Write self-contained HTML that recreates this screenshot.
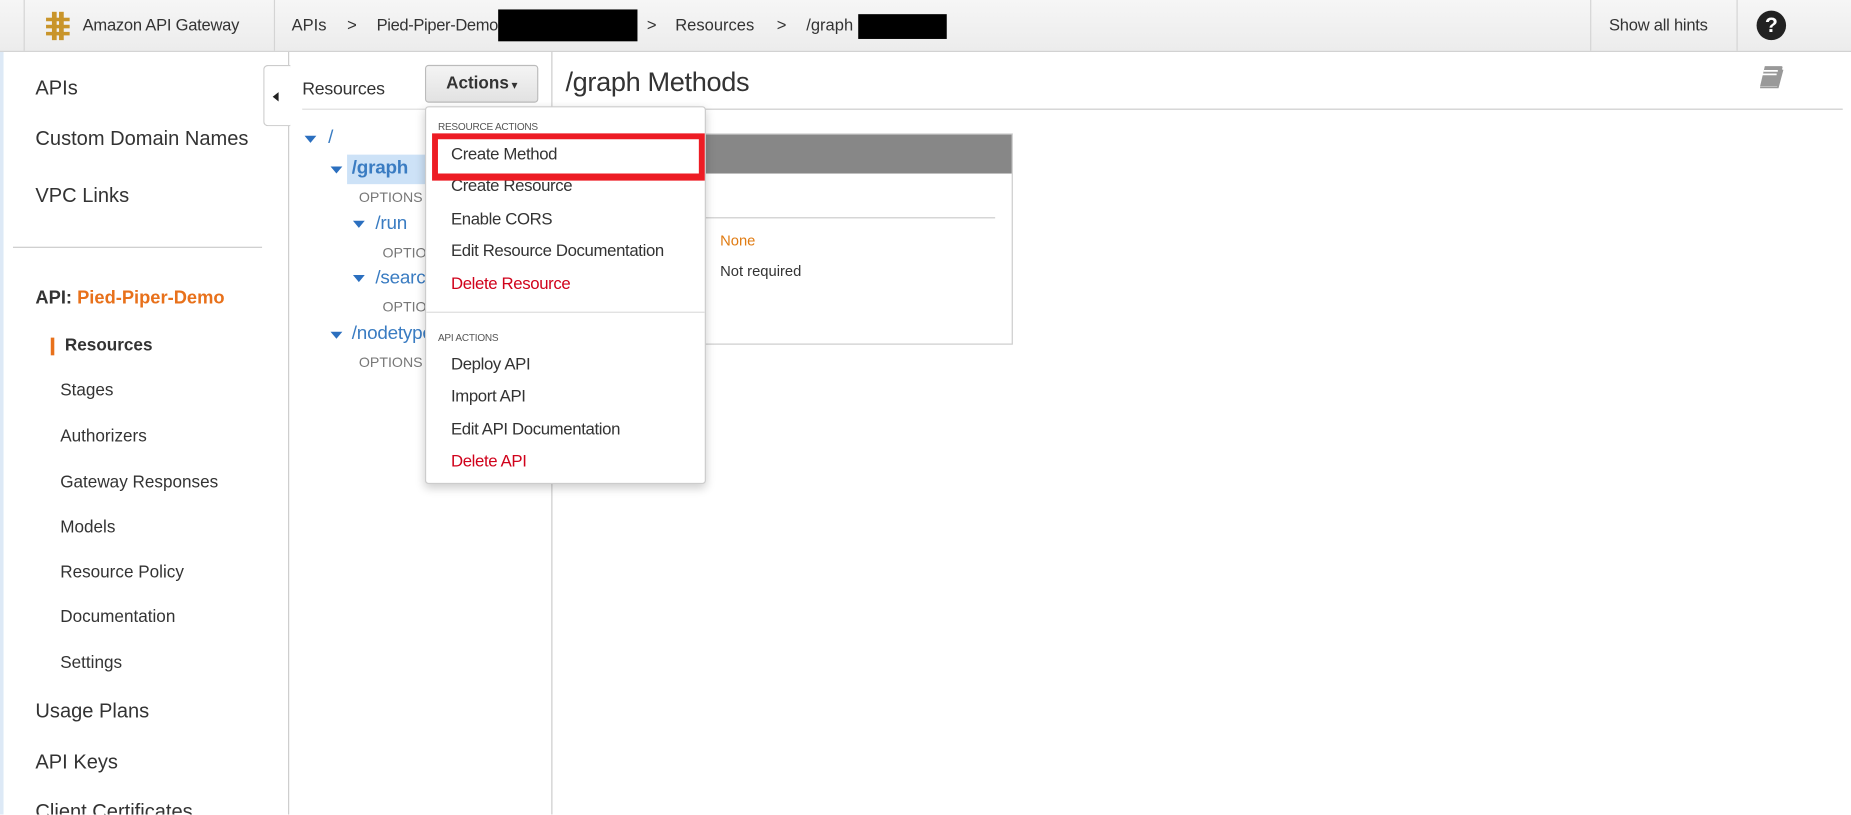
<!DOCTYPE html>
<html><head><meta charset="utf-8"><style>
*{margin:0;padding:0;box-sizing:border-box}
html,body{width:1851px;height:814px;overflow:hidden;background:#fff;font-family:"Liberation Sans",sans-serif;color:#333}
#w{position:absolute;left:0;top:0;width:1568px;height:690px;transform:scale(1.18049);transform-origin:0 0;overflow:hidden}
.a{position:absolute;white-space:nowrap}
.hd{position:absolute;left:0;top:0;width:1568px;height:44px;background:linear-gradient(#f6f6f6,#ececec);border-bottom:1px solid #cfcfcf}
.vl{position:absolute;top:0;height:43px;width:1px;background:#d4d4d4}
.hd .a{font-size:14px;color:#333;top:13px}
.blk{position:absolute;background:#000}
.side{position:absolute;left:0;top:44px;width:245px;height:646px;border-right:1px solid #ccc;background:#fff}
.big{font-size:17px;color:#333}
.sm{font-size:14.5px;color:#333}
.tr{font-size:16px;color:#3a7cc2;letter-spacing:-0.2px}
.tri{position:absolute;width:0;height:0;border-left:5px solid transparent;border-right:5px solid transparent;border-top:6px solid #2b6fbf}
.op{font-size:12px;color:#777}
.dd{position:absolute;left:360px;top:90px;width:238px;height:320px;background:#fff;border:1px solid #ccc;border-radius:3px;box-shadow:0 3px 8px rgba(0,0,0,.2);overflow:hidden}
.dd .a{font-size:14.2px;color:#333;left:21px;letter-spacing:-0.3px}
.dd .h{font-size:8.5px;color:#555;left:10px;letter-spacing:-0.2px}
.dd .r{color:#d0021b}
</style></head><body><div id="w">
<div class="a" style="left:0;top:44px;width:3px;height:646px;background:#dde9f6;z-index:2"></div>
<div class="hd">
 <div class="vl" style="left:20px"></div>
 <div class="vl" style="left:232px"></div>
 <div class="vl" style="left:1347px"></div>
 <div class="vl" style="left:1471px"></div>
 <svg class="a" style="left:37px;top:9px" width="24" height="26" viewBox="0 0 24 26"><g fill="#c9952a"><rect x="7" y="1" width="4" height="24"/><rect x="13" y="1" width="4" height="24"/><rect x="2" y="6" width="20" height="3"/><rect x="2" y="12" width="20" height="3"/><rect x="2" y="18" width="20" height="3"/></g></svg>
 <div class="a" style="left:70px;letter-spacing:-0.2px">Amazon API Gateway</div>
 <div class="a" style="left:247px">APIs</div>
 <div class="a" style="left:294px">&gt;</div>
 <div class="a" style="left:319px;letter-spacing:-0.3px">Pied-Piper-Demo</div>
 <div class="blk" style="left:422px;top:8px;width:118px;height:27px"></div>
 <div class="a" style="left:548px">&gt;</div>
 <div class="a" style="left:572px">Resources</div>
 <div class="a" style="left:658px">&gt;</div>
 <div class="a" style="left:683px">/graph</div>
 <div class="blk" style="left:727px;top:12px;width:75px;height:21px"></div>
 <div class="a" style="left:1363px;letter-spacing:-0.2px">Show all hints</div>
 <div class="a" style="left:1488px;top:9px;width:25px;height:25px;border-radius:50%;background:#222;color:#fff;font-weight:bold;font-size:18px;text-align:center;line-height:25px">?</div>
</div>
<div class="side">
 <div class="a big" style="left:30px;top:21px">APIs</div>
 <div class="a big" style="left:30px;top:64px">Custom Domain Names</div>
 <div class="a big" style="left:30px;top:112px">VPC Links</div>
 <div class="a" style="left:11px;top:165px;width:211px;height:1px;background:#ccc"></div>
 <div class="a" style="left:30px;top:200px;font-size:15.5px;font-weight:bold;color:#333">API: <span style="color:#e8711b">Pied-Piper-Demo</span></div>
 <div class="a" style="left:43px;top:242px;width:3px;height:15px;background:#e8711b"></div>
 <div class="a sm" style="left:55px;top:241px;font-weight:bold">Resources</div>
 <div class="a sm" style="left:51px;top:279px">Stages</div>
 <div class="a sm" style="left:51px;top:318px">Authorizers</div>
 <div class="a sm" style="left:51px;top:357px">Gateway Responses</div>
 <div class="a sm" style="left:51px;top:395px">Models</div>
 <div class="a sm" style="left:51px;top:433px">Resource Policy</div>
 <div class="a sm" style="left:51px;top:471px">Documentation</div>
 <div class="a sm" style="left:51px;top:510px">Settings</div>
 <div class="a big" style="left:30px;top:549px">Usage Plans</div>
 <div class="a big" style="left:30px;top:592px">API Keys</div>
 <div class="a big" style="left:30px;top:634px">Client Certificates</div>
</div>
<div class="a" style="left:223px;top:55px;width:23px;height:52px;background:#fff;border:1px solid #ccc;border-right:none;border-radius:4px 0 0 4px"></div>
<div class="a" style="left:231px;top:78px;width:0;height:0;border-top:4px solid transparent;border-bottom:4px solid transparent;border-right:5px solid #222"></div>
<div class="a" style="left:467px;top:44px;width:1px;height:646px;background:#ccc"></div>
<div class="a" style="left:256px;top:67px;font-size:15px;color:#333;letter-spacing:-0.2px">Resources</div>
<div class="a" style="left:360px;top:55px;width:96px;height:32px;border:1px solid #bbb;border-radius:3px;background:linear-gradient(#f4f4f4,#e2e2e2);font-size:14.5px;font-weight:bold;color:#333;text-align:center;line-height:30px">Actions<span style="font-size:9px"> ▾</span></div>
<div class="a" style="left:256px;top:92px;width:211px;height:1px;background:#ddd"></div>
<div class="tri" style="left:258px;top:115px"></div><div class="a tr" style="left:278px;top:108px">/</div>
<div class="a" style="left:294px;top:131px;width:70px;height:25px;background:#cde2f7"></div>
<div class="tri" style="left:280px;top:141px"></div><div class="a tr" style="left:298px;top:134px;font-weight:bold">/graph</div>
<div class="a op" style="left:304px;top:160px">OPTIONS</div>
<div class="tri" style="left:299px;top:187px"></div><div class="a tr" style="left:318px;top:181px">/run</div>
<div class="a op" style="left:324px;top:207px">OPTIONS</div>
<div class="tri" style="left:299px;top:233px"></div><div class="a tr" style="left:318px;top:227px">/search</div>
<div class="a op" style="left:324px;top:253px">OPTIONS</div>
<div class="tri" style="left:280px;top:281px"></div><div class="a tr" style="left:298px;top:274px">/nodetypes</div>
<div class="a op" style="left:304px;top:300px">OPTIONS</div>
<div class="a" style="left:479px;top:56px;font-size:23px;color:#333;letter-spacing:-0.3px">/graph Methods</div>
<div class="a" style="left:479px;top:92px;width:1082px;height:1px;background:#ccc"></div>
<svg class="a" style="left:1488px;top:55px" width="26" height="24" viewBox="0 0 26 24"><path d="M7 1h14a1 1 0 0 1 1 1l-4 16H3z" fill="#999"/><path d="M6 5h12M5 8h12" stroke="#fff" stroke-width="1.5"/><path d="M3 19h15l4-15" stroke="#999" stroke-width="1.5" fill="none"/></svg>
<div class="a" style="left:483px;top:113px;width:375px;height:179px;border:1px solid #ccc;background:#fff"></div>
<div class="a" style="left:484px;top:114px;width:373px;height:33px;background:#878787"></div>
<div class="a" style="left:597px;top:184px;width:246px;height:1px;background:#ccc"></div>
<div class="a" style="left:610px;top:197px;font-size:12.5px;color:#e07b12">None</div>
<div class="a" style="left:610px;top:223px;font-size:12.5px;color:#333">Not required</div>
<div class="dd">
 <div class="a h" style="top:11px">RESOURCE ACTIONS</div>
 <div class="a" style="left:21px;top:32px">Create Method</div>
 <div class="a" style="top:59px">Create Resource</div>
 <div class="a" style="top:87px">Enable CORS</div>
 <div class="a" style="top:114px">Edit Resource Documentation</div>
 <div class="a r" style="top:142px">Delete Resource</div>
 <div class="a" style="left:0;top:173px;width:238px;height:1px;background:#ddd"></div>
 <div class="a h" style="top:190px">API ACTIONS</div>
 <div class="a" style="top:210px">Deploy API</div>
 <div class="a" style="top:237px">Import API</div>
 <div class="a" style="top:265px">Edit API Documentation</div>
 <div class="a r" style="top:292px">Delete API</div>
</div>
<div class="a" style="left:366px;top:113px;width:231px;height:40px;border:5px solid #ed1c24;border-bottom-width:6px"></div>
</div></body></html>
